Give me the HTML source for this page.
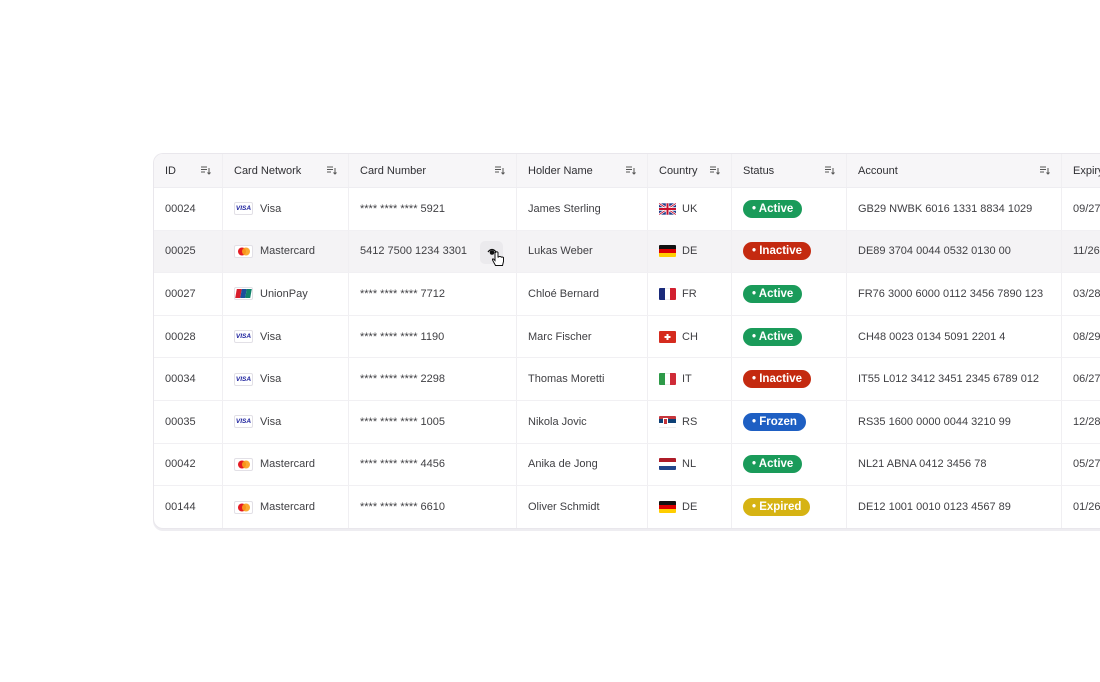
<!DOCTYPE html>
<html><head><meta charset="utf-8"><style>
*{box-sizing:border-box;margin:0;padding:0}
body{width:1100px;height:682px;background:#fff;overflow:hidden;position:relative;font-family:"Liberation Sans",sans-serif;font-size:11px;color:#404044}
.tbl{position:absolute;left:153px;top:153px;width:1000px;height:376px;border:1px solid #e9e7ec;border-right:none;border-radius:10px 0 0 10px;overflow:hidden;background:#fff;box-shadow:0 2px 0 #eeedf1}
.row{position:absolute;left:0;display:flex;height:42.6px;border-bottom:1px solid #f1f0f3;width:100%}
.hdr{top:0;height:34px;background:#f7f6f8;border-bottom:1px solid #eeedf1;color:#2f2f33}
.c{flex:none;display:flex;align-items:center;padding-left:11px;border-right:1px solid #f0eff2;position:relative;height:100%}
.w1{width:69px}.w2{width:126px}.w3{width:168px}.w4{width:131px}.w5{width:84px}.w6{width:115px}.w7{width:215px}.w8{width:80px;border-right:none}
.s{position:absolute;right:11px;top:11px}
.ic{width:19px;height:13px;border:1px solid #e2e0e6;border-radius:2px;margin-right:7px;display:flex;align-items:center;justify-content:center;background:#fff}
.visa{font-size:6.5px;font-weight:bold;color:#1a1f9c;font-style:italic}
.fl{width:17px;height:12px;margin-right:6px;border-radius:1px;overflow:hidden;display:flex}
.b{display:inline-block;height:18px;line-height:18px;border-radius:9px;color:#fff;font-weight:bold;font-size:11.5px;padding:0 9px 0 9px}
.g{background:#1a9b5a}.r{background:#c42a10}.bl{background:#1e5fc3}.y{background:#d6b313}
.hv{background:#f4f3f5}
</style></head><body>
<div class="tbl">
<div class="row hdr">
<div class="c w1">ID<svg class="s" width="10" height="10" viewBox="0 0 10 10"><path d="M0 2h6M0 4.5h6M0 7h4M8 3v6M6.5 7.5L8 9l1.5-1.5" stroke="#555" stroke-width="1" fill="none"/></svg></div>
<div class="c w2">Card Network<svg class="s" width="10" height="10" viewBox="0 0 10 10"><path d="M0 2h6M0 4.5h6M0 7h4M8 3v6M6.5 7.5L8 9l1.5-1.5" stroke="#555" stroke-width="1" fill="none"/></svg></div>
<div class="c w3">Card Number<svg class="s" width="10" height="10" viewBox="0 0 10 10"><path d="M0 2h6M0 4.5h6M0 7h4M8 3v6M6.5 7.5L8 9l1.5-1.5" stroke="#555" stroke-width="1" fill="none"/></svg></div>
<div class="c w4">Holder Name<svg class="s" width="10" height="10" viewBox="0 0 10 10"><path d="M0 2h6M0 4.5h6M0 7h4M8 3v6M6.5 7.5L8 9l1.5-1.5" stroke="#555" stroke-width="1" fill="none"/></svg></div>
<div class="c w5">Country<svg class="s" width="10" height="10" viewBox="0 0 10 10"><path d="M0 2h6M0 4.5h6M0 7h4M8 3v6M6.5 7.5L8 9l1.5-1.5" stroke="#555" stroke-width="1" fill="none"/></svg></div>
<div class="c w6">Status<svg class="s" width="10" height="10" viewBox="0 0 10 10"><path d="M0 2h6M0 4.5h6M0 7h4M8 3v6M6.5 7.5L8 9l1.5-1.5" stroke="#555" stroke-width="1" fill="none"/></svg></div>
<div class="c w7">Account<svg class="s" width="10" height="10" viewBox="0 0 10 10"><path d="M0 2h6M0 4.5h6M0 7h4M8 3v6M6.5 7.5L8 9l1.5-1.5" stroke="#555" stroke-width="1" fill="none"/></svg></div>
<div class="c w8">Expiry</div>
</div>

<div class="row" style="top:34px"><div class="c w1">00024</div><div class="c w2"><span class="ic"><span class="visa">VISA</span></span>Visa</div><div class="c w3">**** **** **** 5921</div><div class="c w4">James Sterling</div><div class="c w5"><svg class="fl" viewBox="0 0 60 40" width="17" height="12"><rect width="60" height="40" fill="#1f3a8a"/><path d="M0 0L60 40M60 0L0 40" stroke="#fff" stroke-width="8"/><path d="M0 0L60 40M60 0L0 40" stroke="#c8102e" stroke-width="3"/><path d="M30 0v40M0 20h60" stroke="#fff" stroke-width="12"/><path d="M30 0v40M0 20h60" stroke="#c8102e" stroke-width="7"/></svg>UK</div><div class="c w6"><span class="b g">• Active</span></div><div class="c w7">GB29 NWBK 6016 1331 8834 1029</div><div class="c w8">09/27</div></div>

<div class="row hv" style="top:76.6px"><div class="c w1">00025</div><div class="c w2"><span class="ic"><svg width="14" height="9"><circle cx="5" cy="4.5" r="4" fill="#e51b23"/><circle cx="9" cy="4.5" r="4" fill="#f9a11b" opacity=".9"/></svg></span>Mastercard</div><div class="c w3">5412 7500 1234 3301<span style="position:absolute;left:131px;top:10px;width:23px;height:23px;border-radius:5px;background:#ebeaed"></span><svg style="position:absolute;left:138px;top:16px" width="10" height="9" viewBox="0 0 10 9"><path d="M1 5Q5 0 9 5" stroke="#111" stroke-width="1.3" fill="none"/><circle cx="5" cy="5.5" r="2.3" fill="#111"/></svg><svg style="position:absolute;left:143px;top:20px" width="13" height="17" viewBox="0 0 13 17"><path d="M3 1.5v8l-1.5-1.5q-1.3-.5-1 1l3 5.5h7l1-4v-4q-1.5-1-2 0 0-1-2-1-1 0-1.5 1v-5q-1-1.5-2.5 0z" fill="#fff" stroke="#111" stroke-width="1"/></svg></div><div class="c w4">Lukas Weber</div><div class="c w5"><span class="fl" style="flex-direction:column"><i style="flex:1;background:#111"></i><i style="flex:1;background:#dd0000"></i><i style="flex:1;background:#ffce00"></i></span>DE</div><div class="c w6"><span class="b r">• Inactive</span></div><div class="c w7">DE89 3704 0044 0532 0130 00</div><div class="c w8">11/26</div></div>

<div class="row" style="top:119.2px"><div class="c w1">00027</div><div class="c w2"><span class="ic"><span style="display:flex;width:15px;height:9px;transform:skewX(-10deg)"><i style="flex:1;background:#d81e2c"></i><i style="flex:1;background:#1a4f9c"></i><i style="flex:1;background:#11826a"></i></span></span>UnionPay</div><div class="c w3">**** **** **** 7712</div><div class="c w4">Chloé Bernard</div><div class="c w5"><span class="fl"><i style="flex:1;background:#1a2a7a"></i><i style="flex:1;background:#fff;border-top:1px solid #eee;border-bottom:1px solid #eee"></i><i style="flex:1;background:#d22030"></i></span>FR</div><div class="c w6"><span class="b g">• Active</span></div><div class="c w7">FR76 3000 6000 0112 3456 7890 123</div><div class="c w8">03/28</div></div>

<div class="row" style="top:161.8px"><div class="c w1">00028</div><div class="c w2"><span class="ic"><span class="visa">VISA</span></span>Visa</div><div class="c w3">**** **** **** 1190</div><div class="c w4">Marc Fischer</div><div class="c w5"><svg class="fl" viewBox="0 0 17 12" width="17" height="12"><rect width="17" height="12" fill="#d52b1e"/><path d="M8.5 3v6M5.5 6h6" stroke="#fff" stroke-width="2"/></svg>CH</div><div class="c w6"><span class="b g">• Active</span></div><div class="c w7">CH48 0023 0134 5091 2201 4</div><div class="c w8">08/29</div></div>

<div class="row" style="top:204.4px"><div class="c w1">00034</div><div class="c w2"><span class="ic"><span class="visa">VISA</span></span>Visa</div><div class="c w3">**** **** **** 2298</div><div class="c w4">Thomas Moretti</div><div class="c w5"><span class="fl"><i style="flex:1;background:#2e9a48"></i><i style="flex:1;background:#fff;border-top:1px solid #eee;border-bottom:1px solid #eee"></i><i style="flex:1;background:#cf2b37"></i></span>IT</div><div class="c w6"><span class="b r">• Inactive</span></div><div class="c w7">IT55 L012 3412 3451 2345 6789 012</div><div class="c w8">06/27</div></div>

<div class="row" style="top:247px"><div class="c w1">00035</div><div class="c w2"><span class="ic"><span class="visa">VISA</span></span>Visa</div><div class="c w3">**** **** **** 1005</div><div class="c w4">Nikola Jovic</div><div class="c w5"><span class="fl" style="flex-direction:column;position:relative"><i style="flex:1;background:#c6363c"></i><i style="flex:1;background:#0c4076"></i><i style="flex:1;background:#fff;border-bottom:1px solid #eee"></i><b style="position:absolute;left:4px;top:2px;width:5px;height:7px;background:#c6363c;border:1px solid #fff"></b></span>RS</div><div class="c w6"><span class="b bl">• Frozen</span></div><div class="c w7">RS35 1600 0000 0044 3210 99</div><div class="c w8">12/28</div></div>

<div class="row" style="top:289.6px"><div class="c w1">00042</div><div class="c w2"><span class="ic"><svg width="14" height="9"><circle cx="5" cy="4.5" r="4" fill="#e51b23"/><circle cx="9" cy="4.5" r="4" fill="#f9a11b" opacity=".9"/></svg></span>Mastercard</div><div class="c w3">**** **** **** 4456</div><div class="c w4">Anika de Jong</div><div class="c w5"><span class="fl" style="flex-direction:column"><i style="flex:1;background:#ae1c28"></i><i style="flex:1;background:#fff"></i><i style="flex:1;background:#21468b"></i></span>NL</div><div class="c w6"><span class="b g">• Active</span></div><div class="c w7">NL21 ABNA 0412 3456 78</div><div class="c w8">05/27</div></div>

<div class="row" style="top:332.2px;border-bottom:none"><div class="c w1">00144</div><div class="c w2"><span class="ic"><svg width="14" height="9"><circle cx="5" cy="4.5" r="4" fill="#e51b23"/><circle cx="9" cy="4.5" r="4" fill="#f9a11b" opacity=".9"/></svg></span>Mastercard</div><div class="c w3">**** **** **** 6610</div><div class="c w4">Oliver Schmidt</div><div class="c w5"><span class="fl" style="flex-direction:column"><i style="flex:1;background:#111"></i><i style="flex:1;background:#dd0000"></i><i style="flex:1;background:#ffce00"></i></span>DE</div><div class="c w6"><span class="b y">• Expired</span></div><div class="c w7">DE12 1001 0010 0123 4567 89</div><div class="c w8">01/26</div></div>
</div>
</body></html>
